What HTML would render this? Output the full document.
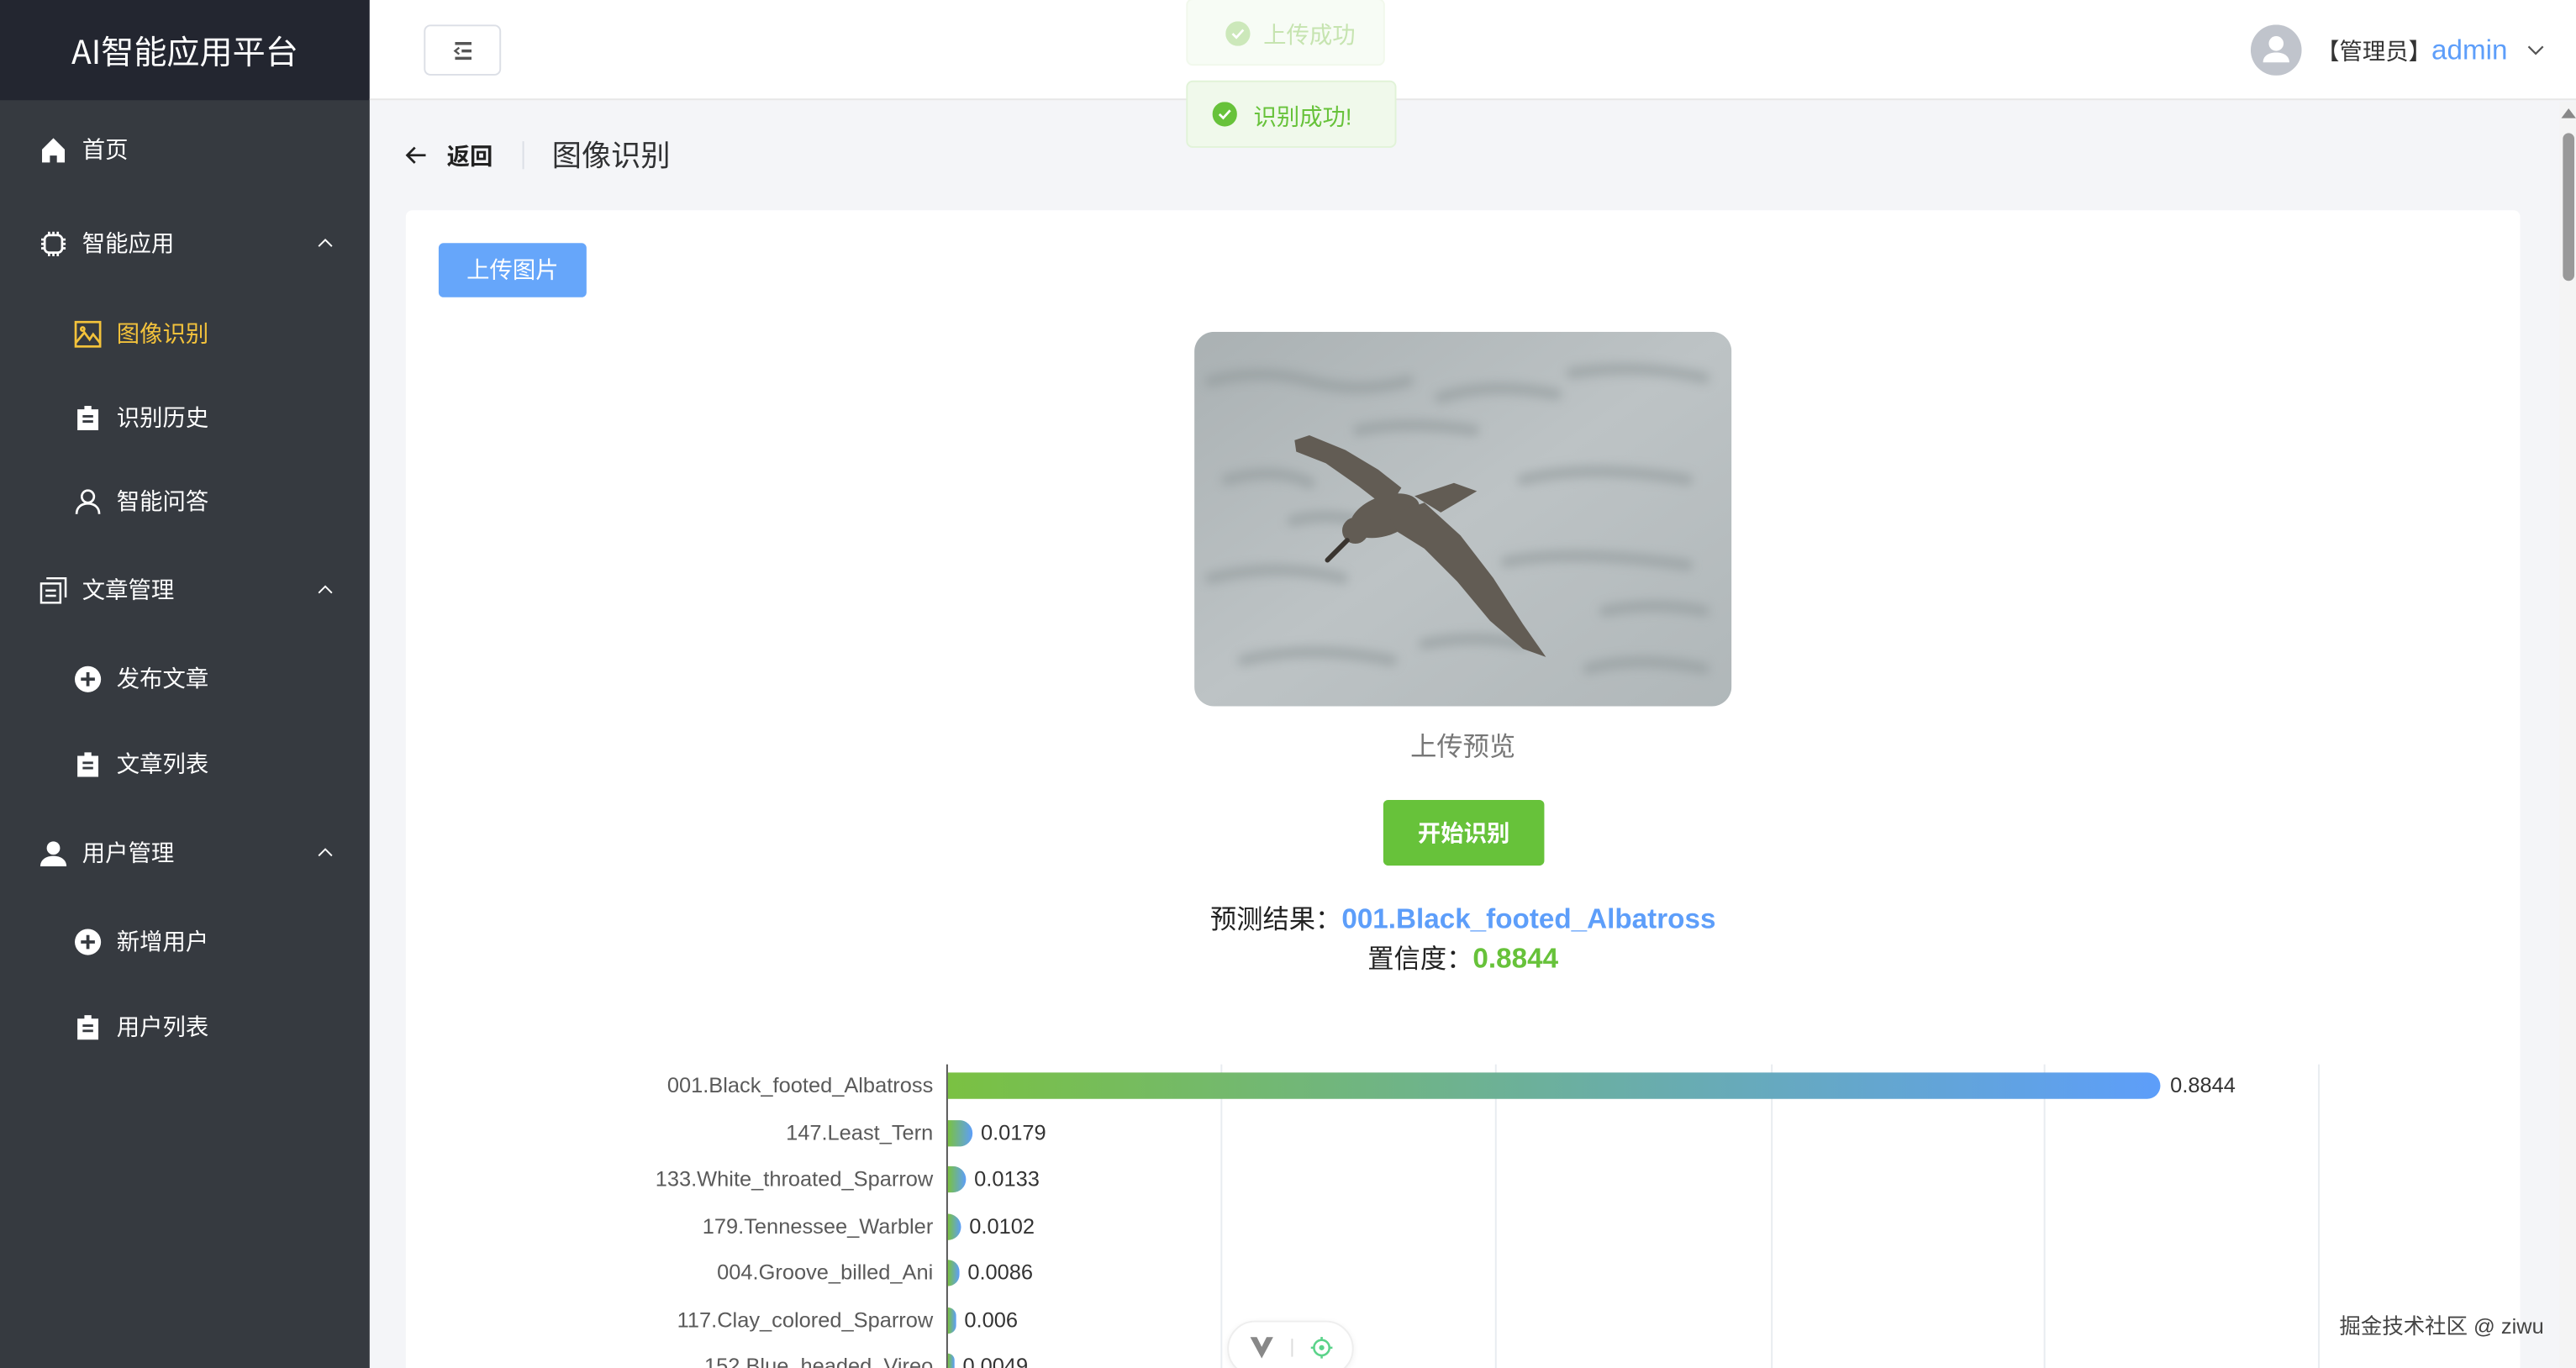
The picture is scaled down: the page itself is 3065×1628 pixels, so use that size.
<!DOCTYPE html>
<html><head><meta charset="utf-8">
<style>
*{margin:0;padding:0;box-sizing:border-box}
html,body{width:3065px;height:1628px;overflow:hidden;background:#f3f4f7}
#o{position:relative;width:3065px;height:1628px;overflow:hidden}
#w{position:absolute;left:0;top:0;width:1568px;height:833px;overflow:hidden;transform:scale(1.95472);transform-origin:0 0;font-family:"Liberation Sans","Noto Sans CJK SC",sans-serif;background:#f4f5f8}
.a{position:absolute}
.side{left:0;top:0;width:225px;height:833px;background:#363a40}
.logo{left:0;top:0;width:225px;height:61px;background:#232630;color:#fff;font-size:20px;text-align:center;line-height:62px;font-family:"Noto Sans CJK SC",sans-serif}
.mi{color:#fff;font-size:14px;white-space:nowrap;line-height:20px}
.mi svg{position:absolute;left:-26px;top:2px}
.chev{position:absolute;left:193px;width:10px;height:10px}
.hdr{left:225px;top:0;width:1343px;height:61px;background:#fff;border-bottom:1px solid #e6e6e6}
.card{left:247px;top:128px;width:1287px;height:705px;background:#fff;border-radius:4px 4px 0 0}
.lbl{position:absolute;right:1000px;font-size:13px;color:#5a5a5a;white-space:nowrap;line-height:16px}
.bar{position:absolute;left:577px;height:16px;border-radius:0 8px 8px 0;background:linear-gradient(90deg,#7ac142,#5d9efa)}
.val{position:absolute;font-size:13px;color:#333;line-height:16px}
.grid{position:absolute;top:648px;width:1px;height:185px;background:#e8ecf0}
</style></head><body><div id="o"><div id="w">
<div class="a side"></div>
<div class="a logo">AI智能应用平台</div>

<div class="a mi" style="left:50px;top:81px"><svg width="17" height="17" viewBox="0 0 16 16"><path d="M8 1L1.5 7.5V15H6v-4h4v4h4.5V7.5z" fill="#fff"/></svg>首页</div>
<div class="a mi" style="left:50px;top:138px"><svg width="17" height="17" viewBox="0 0 16 16" fill="none" stroke="#fff" stroke-width="1.3"><rect x="3" y="3" width="10" height="10" rx="2.5"/><path d="M5.5 1v2M8 1v2M10.5 1v2M5.5 13v2M8 13v2M10.5 13v2M1 5.5h2M1 8h2M1 10.5h2M13 5.5h2M13 8h2M13 10.5h2"/></svg>智能应用</div>
<svg class="chev" style="top:143px" viewBox="0 0 10 10"><path d="M1 7l4-4 4 4" stroke="#fff" fill="none" stroke-width="1"/></svg>
<div class="a mi" style="left:71px;top:193px;color:#f3c23b"><svg width="17" height="17" viewBox="0 0 16 16" fill="none" stroke="#f3c23b" stroke-width="1.3"><rect x="1" y="1" width="14" height="14"/><path d="M1 13l5-6 3 4 2-3 4 5"/><circle cx="5" cy="5" r="1"/></svg>图像识别</div>
<div class="a mi" style="left:71px;top:244px"><svg width="17" height="17" viewBox="0 0 16 16"><path d="M2 3h4V1h4v2h4v12H2z" fill="#fff"/><path d="M5 7h6M5 10h6" stroke="#363a40" stroke-width="1.4"/></svg>识别历史</div>
<div class="a mi" style="left:71px;top:295px"><svg width="17" height="17" viewBox="0 0 16 16" fill="none" stroke="#fff" stroke-width="1.3"><circle cx="8" cy="5" r="3.5"/><path d="M1.5 15c0-4 3-6 6.5-6s6.5 2 6.5 6"/></svg>智能问答</div>
<div class="a mi" style="left:50px;top:349px"><svg width="17" height="17" viewBox="0 0 16 16" fill="none" stroke="#fff" stroke-width="1.2"><rect x="1" y="4" width="11" height="11"/><path d="M4 1h11v11M3.5 8h6M3.5 11h6"/></svg>文章管理</div>
<svg class="chev" style="top:354px" viewBox="0 0 10 10"><path d="M1 7l4-4 4 4" stroke="#fff" fill="none" stroke-width="1"/></svg>
<div class="a mi" style="left:71px;top:403px"><svg width="17" height="17" viewBox="0 0 16 16"><circle cx="8" cy="8" r="7.5" fill="#fff"/><path d="M8 4v8M4 8h8" stroke="#363a40" stroke-width="1.8"/></svg>发布文章</div>
<div class="a mi" style="left:71px;top:455px"><svg width="17" height="17" viewBox="0 0 16 16"><path d="M2 3h4V1h4v2h4v12H2z" fill="#fff"/><path d="M5 7h6M5 10h6" stroke="#363a40" stroke-width="1.4"/></svg>文章列表</div>
<div class="a mi" style="left:50px;top:509px"><svg width="17" height="17" viewBox="0 0 16 16" fill="#fff"><circle cx="8" cy="5" r="3.8"/><path d="M0.5 15.5c0-4 3.5-6 7.5-6s7.5 2 7.5 6z"/></svg>用户管理</div>
<svg class="chev" style="top:514px" viewBox="0 0 10 10"><path d="M1 7l4-4 4 4" stroke="#fff" fill="none" stroke-width="1"/></svg>
<div class="a mi" style="left:71px;top:563px"><svg width="17" height="17" viewBox="0 0 16 16"><circle cx="8" cy="8" r="7.5" fill="#fff"/><path d="M8 4v8M4 8h8" stroke="#363a40" stroke-width="1.8"/></svg>新增用户</div>
<div class="a mi" style="left:71px;top:615px"><svg width="17" height="17" viewBox="0 0 16 16"><path d="M2 3h4V1h4v2h4v12H2z" fill="#fff"/><path d="M5 7h6M5 10h6" stroke="#363a40" stroke-width="1.4"/></svg>用户列表</div>

<div class="a hdr"></div>
<div class="a" style="left:258px;top:15px;width:47px;height:31px;border:1px solid #dcdfe6;border-radius:4px;background:#fff"><svg class="a" style="left:17px;top:9px" width="12" height="12" viewBox="0 0 12 12"><path d="M1 1.5h10M5 6h6M1 10.5h10" stroke="#555" stroke-width="1.8"/><path d="M3.5 4L1 6l2.5 2" stroke="#555" fill="none" stroke-width="1.2"/></svg></div>
<svg class="a" style="left:1370px;top:15px" width="31" height="31" viewBox="0 0 31 31"><circle cx="15.5" cy="15.5" r="15.5" fill="#c0c4cc"/><circle cx="15.5" cy="11.5" r="4.5" fill="#fff"/><path d="M7.5 23c0-4 3.5-6 8-6s8 2 8 6z" fill="#fff"/></svg>
<div class="a" style="left:1410px;top:20px;font-size:14px;color:#333;line-height:22px;white-space:nowrap">【管理员】<span style="color:#5d9efa;font-size:17px">admin</span></div>
<svg class="a" style="left:1538px;top:25px" width="11" height="11" viewBox="0 0 10 10"><path d="M1 3l4 4 4-4" stroke="#555" fill="none" stroke-width="1"/></svg>

<div class="a" style="left:722px;top:-1px;width:121px;height:41px;background:#f7fcf4;border:1px solid #f0f8ea;border-radius:4px;opacity:.9"><svg class="a" style="left:23px;top:13px" width="15" height="15" viewBox="0 0 16 16"><circle cx="8" cy="8" r="8" fill="#c7e6b3"/><path d="M4.5 8l2.5 2.5 4.5-5" stroke="#fff" fill="none" stroke-width="1.5"/></svg><span class="a" style="left:46px;top:11px;font-size:14px;color:#c0e2a8;white-space:nowrap">上传成功</span></div>
<div class="a" style="left:722px;top:49px;width:128px;height:41px;background:#f0f9eb;border:1px solid #e1f3d8;border-radius:4px"><svg class="a" style="left:15px;top:12px" width="15" height="15" viewBox="0 0 16 16"><circle cx="8" cy="8" r="8" fill="#67c23a"/><path d="M4.5 8l2.5 2.5 4.5-5" stroke="#fff" fill="none" stroke-width="1.5"/></svg><span class="a" style="left:40px;top:11px;font-size:14px;color:#67c23a;white-space:nowrap">识别成功!</span></div>

<svg class="a" style="left:246px;top:87px" width="15" height="15" viewBox="0 0 16 16"><path d="M14 8H2M7 3L2 8l5 5" stroke="#222" fill="none" stroke-width="1.5"/></svg>
<div class="a" style="left:272px;top:85px;font-size:14px;color:#222;font-weight:bold;line-height:20px">返回</div>
<div class="a" style="left:318px;top:86px;width:1px;height:17px;background:#dcdfe6"></div>
<div class="a" style="left:336px;top:83px;font-size:18px;color:#303133;line-height:24px">图像识别</div>

<div class="a card"></div>
<div class="a" style="left:267px;top:148px;width:90px;height:33px;background:#66a6fa;border-radius:3px;color:#fff;font-size:14px;text-align:center;line-height:33px">上传图片</div>

<svg class="a" style="left:727px;top:202px" width="327" height="228" viewBox="0 0 327 228">
<defs><linearGradient id="sea" x1="0" y1="0" x2="1" y2="1"><stop offset="0" stop-color="#aab1b3"/><stop offset=".5" stop-color="#bdc3c5"/><stop offset="1" stop-color="#b0b7b9"/></linearGradient>
<filter id="bl"><feGaussianBlur stdDeviation="3"/></filter><clipPath id="cp"><rect width="327" height="228" rx="12"/></clipPath></defs>
<g clip-path="url(#cp)">
<rect width="327" height="228" fill="url(#sea)"/>
<g fill="none" stroke="#8e9698" stroke-width="7" opacity=".55" stroke-linecap="round" filter="url(#bl)">
<path d="M10 30q30-8 60 0t60 0"/><path d="M150 40q30-10 70-2"/><path d="M230 25q40-6 80 3"/><path d="M20 90q30-8 50 2"/><path d="M200 90q40-10 100 0"/><path d="M10 150q40-10 80 0"/><path d="M190 140q40-8 110 2"/><path d="M30 200q40-10 90 0"/><path d="M140 190q30-6 60 0"/><path d="M240 205q30-8 70 0"/><path d="M100 60q30-6 70 0"/><path d="M250 170q30-6 60 0"/><path d="M60 115q20-5 40 0"/></g>
<g fill="#625c54">
<path d="M61 66L70 63L92 72L112 84L126 95L118 108L100 94L80 80L62 73z"/>
<ellipse cx="116" cy="112" rx="22" ry="12" transform="rotate(-20 116 112)"/>
<circle cx="98" cy="121" r="8"/>
<path d="M134 100L158 92L172 97L150 110z"/>
<path d="M118 112L140 104L162 124L182 150L200 178L214 198L200 193L180 176L160 152L140 132L124 122z"/>
</g>
<path d="M93 127L81 139" stroke="#3a3530" stroke-width="3" stroke-linecap="round"/>
</g>
</svg>

<div class="a" style="left:727px;top:445px;width:327px;text-align:center;font-size:16px;color:#777;line-height:22px">上传预览</div>
<div class="a" style="left:842px;top:487px;width:98px;height:40px;background:#67c23a;border-radius:3px;color:#fff;font-size:14px;text-align:center;line-height:40px;font-weight:bold">开始识别</div>
<div class="a" style="left:547px;top:549px;width:687px;text-align:center;font-size:16px;color:#222;line-height:22px">预测结果：<b style="color:#5d9efa;font-size:17px">001.Black_footed_Albatross</b></div>
<div class="a" style="left:547px;top:573px;width:687px;text-align:center;font-size:16px;color:#222;line-height:22px">置信度：<b style="color:#67c23a;font-size:17px">0.8844</b></div>

<div class="grid" style="left:743px"></div><div class="grid" style="left:910px"></div><div class="grid" style="left:1078px"></div><div class="grid" style="left:1244px"></div><div class="grid" style="left:1411px"></div>
<div class="a" style="left:576px;top:648px;width:1px;height:185px;background:#555"></div>

<div class="lbl" style="top:653px">001.Black_footed_Albatross</div><div class="bar" style="top:653px;width:738px"></div><div class="val" style="left:1321px;top:653px">0.8844</div>
<div class="lbl" style="top:682px">147.Least_Tern</div><div class="bar" style="top:682px;width:15px"></div><div class="val" style="left:597px;top:682px">0.0179</div>
<div class="lbl" style="top:710px">133.White_throated_Sparrow</div><div class="bar" style="top:710px;width:11px"></div><div class="val" style="left:593px;top:710px">0.0133</div>
<div class="lbl" style="top:739px">179.Tennessee_Warbler</div><div class="bar" style="top:739px;width:8px"></div><div class="val" style="left:590px;top:739px">0.0102</div>
<div class="lbl" style="top:767px">004.Groove_billed_Ani</div><div class="bar" style="top:767px;width:7px"></div><div class="val" style="left:589px;top:767px">0.0086</div>
<div class="lbl" style="top:796px">117.Clay_colored_Sparrow</div><div class="bar" style="top:796px;width:5px"></div><div class="val" style="left:587px;top:796px">0.006</div>
<div class="lbl" style="top:824px">152.Blue_headed_Vireo</div><div class="bar" style="top:824px;width:4px"></div><div class="val" style="left:586px;top:824px">0.0049</div>

<div class="a" style="left:747px;top:804px;width:77px;height:34px;background:#fff;border:1px solid #eee;border-radius:17px;box-shadow:0 1px 4px rgba(0,0,0,.06)"><svg class="a" style="left:13px;top:9px" width="14" height="13" viewBox="0 0 14 13"><path d="M0 0h4l3 6 3-6h4L7 13z" fill="#888"/></svg><div class="a" style="left:38px;top:10px;width:1px;height:11px;background:#ddd"></div><svg class="a" style="left:49px;top:8px" width="15" height="15" viewBox="0 0 16 16" fill="none" stroke="#5bd38a" stroke-width="1.4"><circle cx="8" cy="8" r="5"/><circle cx="8" cy="8" r="1" fill="#5bd38a"/><path d="M8 1v2M8 13v2M1 8h2M13 8h2"/></svg></div>

<div class="a" style="left:1424px;top:797px;font-size:13px;color:#444;white-space:nowrap">掘金技术社区 @ ziwu</div>
<div class="a" style="left:1558px;top:62px;width:10px;height:771px;background:#f4f4f4"></div>
<div class="a" style="left:1560px;top:81px;width:7px;height:90px;background:#999;border-radius:4px"></div>
<svg class="a" style="left:1559px;top:65px" width="9" height="7" viewBox="0 0 9 7"><path d="M0 7l4.5-6 4.5 6z" fill="#888"/></svg>
</div></div></body></html>
